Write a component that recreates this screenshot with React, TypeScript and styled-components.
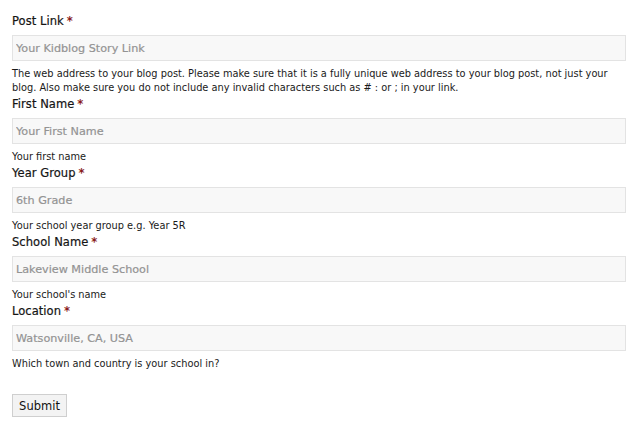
import styled, { createGlobalStyle } from "styled-components";

const GlobalStyle = createGlobalStyle`
  html, body { margin:0; padding:0; background:#fff; }
  body { font-family:"DejaVu Sans", "Liberation Sans", sans-serif; color:#222; }
`

const Form = styled.form`
  display:flex; flex-direction:column; padding:12px 14px 0 12px;
`
const Field = styled.div`
  display:flex; flex-direction:column;
`
const Label = styled.label`
  font-size:11.5px; line-height:16px; padding-top:1px; color:#141414; letter-spacing:0.05px;
  -webkit-text-stroke:0.2px #141414;
`
const Req = styled.span`
  color:#8a1c1c; font-weight:bold; margin-left:3px; -webkit-text-stroke:0;
`
const Input = styled.input`
  box-sizing:border-box; height:26px; margin-top:6px; width:100%;
  background:#f8f8f8; border:1px solid #e3e3e3; border-radius:0;
  padding:0 3px; font-family:inherit; font-size:11.2px; color:#333; outline:none;
  &::placeholder{ color:#939393; -webkit-text-stroke:0.2px #939393; }
`
const Help = styled.p`
  margin:6px 0 0; font-size:9.8px; line-height:14px; color:#1a1a1a;
`
const Actions = styled.div`
  margin-top:23px;
`
const Button = styled.button`
  box-sizing:border-box; height:23px; width:55px; padding:0;
  background:#f3f3f3; border:1px solid #cfcfcf; border-radius:0;
  font-family:"DejaVu Sans", sans-serif; font-size:11.5px; color:#111;
`

const fields = [
  { label:"Post Link", ph:"Your Kidblog Story Link", help:"The web address to your blog post. Please make sure that it is a fully unique web address to your blog post, not just your blog. Also make sure you do not include any invalid characters such as # : or ; in your link." },
  { label:"First Name", ph:"Your First Name", help:"Your first name" },
  { label:"Year Group", ph:"6th Grade", help:"Your school year group e.g. Year 5R" },
  { label:"School Name", ph:"Lakeview Middle School", help:"Your school's name" },
  { label:"Location", ph:"Watsonville, CA, USA", help:"Which town and country is your school in?" },
]

export default function App(){
  return (
    <>
      <GlobalStyle/>
      <Form onSubmit={e=>e.preventDefault()}>
        {fields.map(({label,ph,help})=>(
          <Field key={label}>
            <Label>{label}<Req>*</Req></Label>
            <Input placeholder={ph}/>
            <Help>{help}</Help>
          </Field>
        ))}
        <Actions>
          <Button type="submit">Submit</Button>
        </Actions>
      </Form>
    </>
  )
}
